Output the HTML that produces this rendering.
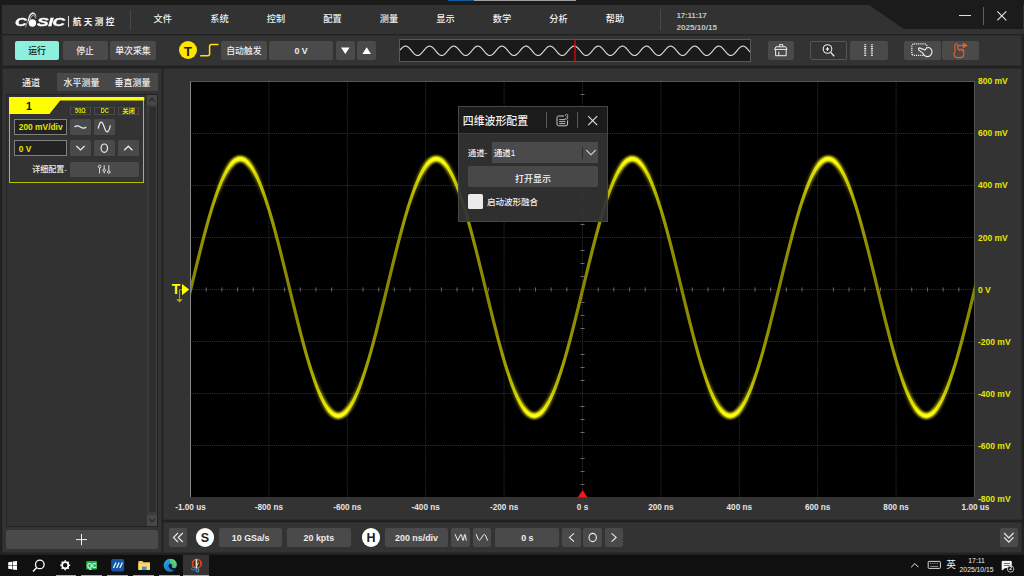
<!DOCTYPE html>
<html lang="zh"><head><meta charset="utf-8"><title>四维波形配置</title>
<style>
*{box-sizing:border-box;margin:0;padding:0}
html,body{width:1024px;height:576px;overflow:hidden;background:#212121}
body{position:relative;font-family:"Liberation Sans","Noto Sans CJK SC",sans-serif;color:#e6e6e6;font-size:9px;line-height:1}
.abs{position:absolute}
.btn{position:absolute;background:#4a4a4a;border-radius:2px;display:flex;align-items:center;justify-content:center;color:#ececec;white-space:nowrap;padding-top:2.4px;font-weight:500}
.panel{position:absolute;background:#333;border:1.4px solid #2b2b2b}
.t{position:absolute;white-space:nowrap}
.c{transform:translate(-50%,-50%)}
svg{position:absolute;left:0;top:0;overflow:visible}
.menu{position:absolute;top:20.4px;font-size:9.2px;color:#f0f0f0;transform:translate(-50%,-50%);white-space:nowrap;font-weight:500}
.xl{position:absolute;top:508px;font-size:8.2px;font-weight:bold;color:#e4e4e4;transform:translate(-50%,-50%);white-space:nowrap}
.yl{position:absolute;left:978px;font-size:8.5px;font-weight:bold;color:#e6e600;transform:translate(0,-50%);white-space:nowrap}
</style></head><body>
<!-- header -->
<div class="abs" style="left:0;top:0;width:1024px;height:34.4px;background:#1b1b1b"></div>
<div class="abs" style="left:1.5px;top:5px;width:1022.5px;height:29px;background:#323232;clip-path:polygon(0 0,867.5px 0,902.5px 24px,1022.5px 24px,1022.5px 29px,0 29px)"></div>
<div class="abs" style="left:1022.6px;top:5px;width:1.4px;height:29px;background:#323232"></div>
<div class="abs" style="left:0;top:34px;width:1024px;height:1.3px;background:#222"></div>
<div class="abs" style="left:448px;top:0;width:25.7px;height:.9px;background:#0e5c9e"></div>
<div class="abs" style="left:473.7px;top:0;width:102.8px;height:.9px;background:#a0a0a0"></div>
<!-- logo -->
<div class="t" style="left:15px;top:15.9px;font-size:11.6px;font-weight:bold;font-style:italic;color:#fff;-webkit-text-stroke:.35px #fff;transform:scaleX(1.42);transform-origin:0 0">C</div>
<div class="t" style="left:37.2px;top:15.9px;font-size:11.6px;font-weight:bold;font-style:italic;color:#fff;-webkit-text-stroke:.35px #fff;transform:scaleX(1.5);transform-origin:0 0;letter-spacing:-.3px">SIC</div>
<svg width="1024" height="576" viewBox="0 0 1024 576"><circle cx="32.4" cy="23" r="3.7" fill="#fff"/><path d="M27.6 21.4Q28.6 13 32.6 12.2Q36 12.4 36.6 17.4Q35 14 32.6 14Q29.8 14.6 28.8 21.6z" fill="#f0f0f0"/><path d="M29.8 20Q30.6 15.6 33.2 15.2Q35.4 15.6 35.8 18.6" stroke="#ddd" stroke-width=".7" fill="none"/><path d="M27.6 21.4Q26.4 25 25.6 27.4" stroke="#ccc" stroke-width=".7" fill="none"/></svg>
<div class="abs" style="left:67.6px;top:16px;width:1.2px;height:11px;background:#d8d8d8"></div>
<div class="t" style="left:72.8px;top:18px;font-size:8.6px;font-weight:bold;color:#f4f4f4;letter-spacing:2.4px">航天测控</div>
<div class="abs" style="left:130px;top:9.5px;width:1px;height:20px;background:#484848"></div>
<div class="menu" style="left:162.8px">文件</div>
<div class="menu" style="left:219.4px">系统</div>
<div class="menu" style="left:275.9px">控制</div>
<div class="menu" style="left:332.4px">配置</div>
<div class="menu" style="left:389px">测量</div>
<div class="menu" style="left:445.5px">显示</div>
<div class="menu" style="left:502px">数学</div>
<div class="menu" style="left:558.4px">分析</div>
<div class="menu" style="left:615px">帮助</div>
<div class="abs" style="left:660.2px;top:9px;width:1px;height:21px;background:#484848"></div>
<div class="t" style="left:676.6px;top:11.9px;font-size:8.1px;font-weight:bold;color:#c4c4c4;letter-spacing:-.25px">17:11:17</div>
<div class="t" style="left:676.6px;top:23.6px;font-size:8.1px;font-weight:bold;color:#c4c4c4;letter-spacing:0">2025/10/15</div>
<!-- window controls -->
<div class="abs" style="left:959px;top:15px;width:12.4px;height:1.1px;background:#e0e0e0"></div>
<div class="abs" style="left:983.4px;top:6.5px;width:1.1px;height:18.5px;background:#5e5e5e"></div>
<svg width="1024" height="576" viewBox="0 0 1024 576"><path d="M997.3 11.3L1006.3 20.3M1006.3 11.3L997.3 20.3" stroke="#e8e8e8" stroke-width="1.1" fill="none"/></svg>

<!-- toolbar -->
<div class="panel" style="left:1.5px;top:35.2px;width:1020.7px;height:31.2px"></div>
<div class="btn" style="left:15px;top:41.2px;width:44px;height:18.4px;background:#8cf0dc;color:#111;font-size:8.9px;font-weight:500">运行</div>
<div class="btn" style="left:62.5px;top:41.2px;width:45px;height:18.4px;font-size:8.9px">停止</div>
<div class="btn" style="left:110.2px;top:41.2px;width:45.6px;height:18.4px;font-size:8.9px">单次采集</div>
<div class="abs" style="left:179px;top:41px;width:18px;height:18px;border-radius:50%;background:#fce600"></div>
<div class="t c" style="left:188px;top:51.2px;font-size:13px;font-weight:bold;color:#222">T</div>
<svg width="1024" height="576" viewBox="0 0 1024 576"><path d="M200.2 55.8H207.6Q209.6 55.8 209.6 53.8V46.6Q209.6 44.6 211.6 44.6H218.5" stroke="#fce600" stroke-width="1.5" fill="none"/></svg>
<div class="btn" style="left:221.2px;top:41.2px;width:45.4px;height:18.4px;font-size:8.9px">自动触发</div>
<div class="btn" style="left:269px;top:41.2px;width:64.3px;height:18.4px;font-size:8.8px;font-weight:bold">0 V</div>
<div class="btn" style="left:336px;top:41.2px;width:18.6px;height:18.4px"></div>
<div class="btn" style="left:357.3px;top:41.2px;width:18.7px;height:18.4px"></div>
<svg width="1024" height="576" viewBox="0 0 1024 576"><path d="M341 47.4H349.6L345.3 54z" fill="#fff"/><path d="M362.4 54H371L366.7 47.2z" fill="#fff"/></svg>
<!-- mini waveform -->
<div class="abs" style="left:399px;top:39.4px;width:352px;height:22.4px;background:#1a1a1a;border:1px solid #585858"></div>
<svg width="1024" height="576" viewBox="0 0 1024 576"><path d="M400.0,50.2 L400.5,49.6 L401.0,49.0 L401.5,48.5 L402.0,47.9 L402.5,47.5 L403.0,47.1 L403.5,46.7 L404.0,46.5 L404.5,46.3 L405.0,46.1 L405.5,46.1 L406.0,46.1 L406.5,46.3 L407.0,46.4 L407.5,46.7 L408.0,47.0 L408.5,47.4 L409.0,47.9 L409.5,48.4 L410.0,49.0 L410.5,49.5 L411.0,50.1 L411.5,50.7 L412.0,51.4 L412.5,52.0 L413.0,52.5 L413.5,53.1 L414.0,53.6 L414.5,54.1 L415.0,54.5 L415.5,54.8 L416.0,55.1 L416.5,55.3 L417.0,55.4 L417.5,55.5 L418.0,55.5 L418.5,55.4 L419.0,55.2 L419.5,54.9 L420.0,54.6 L420.5,54.2 L421.0,53.7 L421.5,53.2 L422.0,52.7 L422.5,52.1 L423.0,51.5 L423.5,50.9 L424.0,50.3 L424.5,49.7 L425.0,49.1 L425.5,48.6 L426.0,48.0 L426.5,47.6 L427.0,47.2 L427.5,46.8 L428.0,46.5 L428.5,46.3 L429.0,46.2 L429.5,46.1 L430.0,46.1 L430.5,46.2 L431.0,46.4 L431.5,46.7 L432.0,47.0 L432.5,47.4 L433.0,47.8 L433.5,48.3 L434.0,48.8 L434.5,49.4 L435.0,50.0 L435.5,50.6 L436.0,51.2 L436.5,51.8 L437.0,52.4 L437.5,53.0 L438.0,53.5 L438.5,54.0 L439.0,54.4 L439.5,54.8 L440.0,55.1 L440.5,55.3 L441.0,55.4 L441.5,55.5 L442.0,55.5 L442.5,55.4 L443.0,55.2 L443.5,55.0 L444.0,54.7 L444.5,54.3 L445.0,53.8 L445.5,53.4 L446.0,52.8 L446.5,52.2 L447.0,51.7 L447.5,51.0 L448.0,50.4 L448.5,49.8 L449.0,49.2 L449.5,48.7 L450.0,48.1 L450.5,47.7 L451.0,47.2 L451.5,46.9 L452.0,46.6 L452.5,46.3 L453.0,46.2 L453.5,46.1 L454.0,46.1 L454.5,46.2 L455.0,46.4 L455.5,46.6 L456.0,46.9 L456.5,47.3 L457.0,47.7 L457.5,48.2 L458.0,48.7 L458.5,49.3 L459.0,49.9 L459.5,50.5 L460.0,51.1 L460.5,51.7 L461.0,52.3 L461.5,52.9 L462.0,53.4 L462.5,53.9 L463.0,54.3 L463.5,54.7 L464.0,55.0 L464.5,55.2 L465.0,55.4 L465.5,55.5 L466.0,55.5 L466.5,55.4 L467.0,55.3 L467.5,55.0 L468.0,54.7 L468.5,54.4 L469.0,53.9 L469.5,53.5 L470.0,52.9 L470.5,52.4 L471.0,51.8 L471.5,51.2 L472.0,50.6 L472.5,49.9 L473.0,49.4 L473.5,48.8 L474.0,48.2 L474.5,47.8 L475.0,47.3 L475.5,46.9 L476.0,46.6 L476.5,46.4 L477.0,46.2 L477.5,46.1 L478.0,46.1 L478.5,46.2 L479.0,46.3 L479.5,46.5 L480.0,46.8 L480.5,47.2 L481.0,47.6 L481.5,48.1 L482.0,48.6 L482.5,49.2 L483.0,49.8 L483.5,50.4 L484.0,51.0 L484.5,51.6 L485.0,52.2 L485.5,52.8 L486.0,53.3 L486.5,53.8 L487.0,54.2 L487.5,54.6 L488.0,54.9 L488.5,55.2 L489.0,55.4 L489.5,55.5 L490.0,55.5 L490.5,55.4 L491.0,55.3 L491.5,55.1 L492.0,54.8 L492.5,54.4 L493.0,54.0 L493.5,53.6 L494.0,53.0 L494.5,52.5 L495.0,51.9 L495.5,51.3 L496.0,50.7 L496.5,50.1 L497.0,49.5 L497.5,48.9 L498.0,48.4 L498.5,47.9 L499.0,47.4 L499.5,47.0 L500.0,46.7 L500.5,46.4 L501.0,46.2 L501.5,46.1 L502.0,46.1 L502.5,46.2 L503.0,46.3 L503.5,46.5 L504.0,46.8 L504.5,47.1 L505.0,47.5 L505.5,48.0 L506.0,48.5 L506.5,49.1 L507.0,49.6 L507.5,50.2 L508.0,50.9 L508.5,51.5 L509.0,52.1 L509.5,52.6 L510.0,53.2 L510.5,53.7 L511.0,54.2 L511.5,54.6 L512.0,54.9 L512.5,55.2 L513.0,55.3 L513.5,55.5 L514.0,55.5 L514.5,55.5 L515.0,55.3 L515.5,55.1 L516.0,54.9 L516.5,54.5 L517.0,54.1 L517.5,53.7 L518.0,53.1 L518.5,52.6 L519.0,52.0 L519.5,51.4 L520.0,50.8 L520.5,50.2 L521.0,49.6 L521.5,49.0 L522.0,48.5 L522.5,47.9 L523.0,47.5 L523.5,47.1 L524.0,46.7 L524.5,46.5 L525.0,46.3 L525.5,46.1 L526.0,46.1 L526.5,46.1 L527.0,46.3 L527.5,46.4 L528.0,46.7 L528.5,47.0 L529.0,47.4 L529.5,47.9 L530.0,48.4 L530.5,49.0 L531.0,49.5 L531.5,50.1 L532.0,50.7 L532.5,51.4 L533.0,52.0 L533.5,52.5 L534.0,53.1 L534.5,53.6 L535.0,54.1 L535.5,54.5 L536.0,54.8 L536.5,55.1 L537.0,55.3 L537.5,55.4 L538.0,55.5 L538.5,55.5 L539.0,55.4 L539.5,55.2 L540.0,54.9 L540.5,54.6 L541.0,54.2 L541.5,53.7 L542.0,53.2 L542.5,52.7 L543.0,52.1 L543.5,51.5 L544.0,50.9 L544.5,50.3 L545.0,49.7 L545.5,49.1 L546.0,48.6 L546.5,48.0 L547.0,47.6 L547.5,47.2 L548.0,46.8 L548.5,46.5 L549.0,46.3 L549.5,46.2 L550.0,46.1 L550.5,46.1 L551.0,46.2 L551.5,46.4 L552.0,46.7 L552.5,47.0 L553.0,47.4 L553.5,47.8 L554.0,48.3 L554.5,48.8 L555.0,49.4 L555.5,50.0 L556.0,50.6 L556.5,51.2 L557.0,51.8 L557.5,52.4 L558.0,53.0 L558.5,53.5 L559.0,54.0 L559.5,54.4 L560.0,54.8 L560.5,55.1 L561.0,55.3 L561.5,55.4 L562.0,55.5 L562.5,55.5 L563.0,55.4 L563.5,55.2 L564.0,55.0 L564.5,54.7 L565.0,54.3 L565.5,53.8 L566.0,53.4 L566.5,52.8 L567.0,52.2 L567.5,51.7 L568.0,51.0 L568.5,50.4 L569.0,49.8 L569.5,49.2 L570.0,48.7 L570.5,48.1 L571.0,47.7 L571.5,47.2 L572.0,46.9 L572.5,46.6 L573.0,46.3 L573.5,46.2 L574.0,46.1 L574.5,46.1 L575.0,46.2 L575.5,46.4 L576.0,46.6 L576.5,46.9 L577.0,47.3 L577.5,47.7 L578.0,48.2 L578.5,48.7 L579.0,49.3 L579.5,49.9 L580.0,50.5 L580.5,51.1 L581.0,51.7 L581.5,52.3 L582.0,52.9 L582.5,53.4 L583.0,53.9 L583.5,54.3 L584.0,54.7 L584.5,55.0 L585.0,55.2 L585.5,55.4 L586.0,55.5 L586.5,55.5 L587.0,55.4 L587.5,55.3 L588.0,55.0 L588.5,54.7 L589.0,54.4 L589.5,53.9 L590.0,53.5 L590.5,52.9 L591.0,52.4 L591.5,51.8 L592.0,51.2 L592.5,50.6 L593.0,49.9 L593.5,49.4 L594.0,48.8 L594.5,48.2 L595.0,47.8 L595.5,47.3 L596.0,46.9 L596.5,46.6 L597.0,46.4 L597.5,46.2 L598.0,46.1 L598.5,46.1 L599.0,46.2 L599.5,46.3 L600.0,46.5 L600.5,46.8 L601.0,47.2 L601.5,47.6 L602.0,48.1 L602.5,48.6 L603.0,49.2 L603.5,49.8 L604.0,50.4 L604.5,51.0 L605.0,51.6 L605.5,52.2 L606.0,52.8 L606.5,53.3 L607.0,53.8 L607.5,54.2 L608.0,54.6 L608.5,54.9 L609.0,55.2 L609.5,55.4 L610.0,55.5 L610.5,55.5 L611.0,55.4 L611.5,55.3 L612.0,55.1 L612.5,54.8 L613.0,54.4 L613.5,54.0 L614.0,53.6 L614.5,53.0 L615.0,52.5 L615.5,51.9 L616.0,51.3 L616.5,50.7 L617.0,50.1 L617.5,49.5 L618.0,48.9 L618.5,48.4 L619.0,47.9 L619.5,47.4 L620.0,47.0 L620.5,46.7 L621.0,46.4 L621.5,46.2 L622.0,46.1 L622.5,46.1 L623.0,46.2 L623.5,46.3 L624.0,46.5 L624.5,46.8 L625.0,47.1 L625.5,47.5 L626.0,48.0 L626.5,48.5 L627.0,49.1 L627.5,49.6 L628.0,50.2 L628.5,50.9 L629.0,51.5 L629.5,52.1 L630.0,52.6 L630.5,53.2 L631.0,53.7 L631.5,54.2 L632.0,54.6 L632.5,54.9 L633.0,55.2 L633.5,55.3 L634.0,55.5 L634.5,55.5 L635.0,55.5 L635.5,55.3 L636.0,55.1 L636.5,54.9 L637.0,54.5 L637.5,54.1 L638.0,53.7 L638.5,53.1 L639.0,52.6 L639.5,52.0 L640.0,51.4 L640.5,50.8 L641.0,50.2 L641.5,49.6 L642.0,49.0 L642.5,48.5 L643.0,47.9 L643.5,47.5 L644.0,47.1 L644.5,46.7 L645.0,46.5 L645.5,46.3 L646.0,46.1 L646.5,46.1 L647.0,46.1 L647.5,46.3 L648.0,46.4 L648.5,46.7 L649.0,47.0 L649.5,47.4 L650.0,47.9 L650.5,48.4 L651.0,49.0 L651.5,49.5 L652.0,50.1 L652.5,50.7 L653.0,51.4 L653.5,52.0 L654.0,52.5 L654.5,53.1 L655.0,53.6 L655.5,54.1 L656.0,54.5 L656.5,54.8 L657.0,55.1 L657.5,55.3 L658.0,55.4 L658.5,55.5 L659.0,55.5 L659.5,55.4 L660.0,55.2 L660.5,54.9 L661.0,54.6 L661.5,54.2 L662.0,53.7 L662.5,53.2 L663.0,52.7 L663.5,52.1 L664.0,51.5 L664.5,50.9 L665.0,50.3 L665.5,49.7 L666.0,49.1 L666.5,48.6 L667.0,48.0 L667.5,47.6 L668.0,47.2 L668.5,46.8 L669.0,46.5 L669.5,46.3 L670.0,46.2 L670.5,46.1 L671.0,46.1 L671.5,46.2 L672.0,46.4 L672.5,46.7 L673.0,47.0 L673.5,47.4 L674.0,47.8 L674.5,48.3 L675.0,48.8 L675.5,49.4 L676.0,50.0 L676.5,50.6 L677.0,51.2 L677.5,51.8 L678.0,52.4 L678.5,53.0 L679.0,53.5 L679.5,54.0 L680.0,54.4 L680.5,54.8 L681.0,55.1 L681.5,55.3 L682.0,55.4 L682.5,55.5 L683.0,55.5 L683.5,55.4 L684.0,55.2 L684.5,55.0 L685.0,54.7 L685.5,54.3 L686.0,53.8 L686.5,53.4 L687.0,52.8 L687.5,52.2 L688.0,51.7 L688.5,51.0 L689.0,50.4 L689.5,49.8 L690.0,49.2 L690.5,48.7 L691.0,48.1 L691.5,47.7 L692.0,47.2 L692.5,46.9 L693.0,46.6 L693.5,46.3 L694.0,46.2 L694.5,46.1 L695.0,46.1 L695.5,46.2 L696.0,46.4 L696.5,46.6 L697.0,46.9 L697.5,47.3 L698.0,47.7 L698.5,48.2 L699.0,48.7 L699.5,49.3 L700.0,49.9 L700.5,50.5 L701.0,51.1 L701.5,51.7 L702.0,52.3 L702.5,52.9 L703.0,53.4 L703.5,53.9 L704.0,54.3 L704.5,54.7 L705.0,55.0 L705.5,55.2 L706.0,55.4 L706.5,55.5 L707.0,55.5 L707.5,55.4 L708.0,55.3 L708.5,55.0 L709.0,54.7 L709.5,54.4 L710.0,53.9 L710.5,53.5 L711.0,52.9 L711.5,52.4 L712.0,51.8 L712.5,51.2 L713.0,50.6 L713.5,49.9 L714.0,49.4 L714.5,48.8 L715.0,48.2 L715.5,47.8 L716.0,47.3 L716.5,46.9 L717.0,46.6 L717.5,46.4 L718.0,46.2 L718.5,46.1 L719.0,46.1 L719.5,46.2 L720.0,46.3 L720.5,46.5 L721.0,46.8 L721.5,47.2 L722.0,47.6 L722.5,48.1 L723.0,48.6 L723.5,49.2 L724.0,49.8 L724.5,50.4 L725.0,51.0 L725.5,51.6 L726.0,52.2 L726.5,52.8 L727.0,53.3 L727.5,53.8 L728.0,54.2 L728.5,54.6 L729.0,54.9 L729.5,55.2 L730.0,55.4 L730.5,55.5 L731.0,55.5 L731.5,55.4 L732.0,55.3 L732.5,55.1 L733.0,54.8 L733.5,54.4 L734.0,54.0 L734.5,53.6 L735.0,53.0 L735.5,52.5 L736.0,51.9 L736.5,51.3 L737.0,50.7 L737.5,50.1 L738.0,49.5 L738.5,48.9 L739.0,48.4 L739.5,47.9 L740.0,47.4 L740.5,47.0 L741.0,46.7 L741.5,46.4 L742.0,46.2 L742.5,46.1 L743.0,46.1 L743.5,46.2 L744.0,46.3 L744.5,46.5 L745.0,46.8 L745.5,47.1 L746.0,47.5 L746.5,48.0 L747.0,48.5 L747.5,49.1 L748.0,49.6 L748.5,50.2 L749.0,50.9 L749.5,51.5 L750.0,52.1" stroke="#dcdcdc" stroke-width="1.15" fill="none"/><path d="M575 39.5V61.7" stroke="#f00000" stroke-width="1.3"/></svg>
<div class="btn" style="left:767.5px;top:41.2px;width:26.5px;height:18.4px"></div>
<div class="btn" style="left:810.2px;top:41.2px;width:37.3px;height:18.5px;background:#333;border:1px solid #555"></div>
<div class="btn" style="left:850.4px;top:41.2px;width:37.2px;height:18.4px"></div>
<div class="btn" style="left:903.5px;top:41.2px;width:37.2px;height:18.4px"></div>
<div class="btn" style="left:942.2px;top:41.2px;width:36.8px;height:18.4px"></div>
<svg id="tbicons" width="1024" height="576" viewBox="0 0 1024 576" fill="none" stroke="#eee" stroke-width="1">
<!-- trash/basket -->
<path d="M779.6 46.8V44.6H782.8V46.8M775.9 46.8H785.7L787 49.4H774.6zM775.6 49.4V55.7H786.2V49.4M778.8 55.7V51.8"/>
<!-- zoom -->
<circle cx="827.5" cy="49" r="4.3" stroke-width="1.1"/><path d="M830.7 52.4L834.2 56.2" stroke-width="1.3"/><path d="M825.8 49H829.2M827.5 47.3V50.7" stroke-width="1.2" stroke="#fff"/>
<!-- cursors -->
<path d="M865.2 44.2V56.8M871.9 44.2V56.8" stroke="#e4e4e4" stroke-width="2" stroke-dasharray="1.1 .7"/>
<!-- select -->
<rect x="911.8" y="43.8" width="15" height="11.6" rx="2.2" stroke-dasharray="1.2 .9" stroke-width="1.3"/>
<path d="M918.7 49.8Q917.9 48.2 919.7 47.9L925 50Q926.4 47.2 929 47.5Q932.4 48.8 931.9 52.6Q930.9 56.8 927 56.6Q924 56.3 923 53.4z" fill="#4a4a4a" stroke-width="1.1"/>
<!-- hand -->
<g stroke="#f0601e" stroke-width="1.1">
<path d="M954.9 52.2V45.2Q954.9 43.8 956.4 43.8T957.9 45.2V49.2H961.6Q963.8 49.4 963.8 51.6V54.4Q963.6 57.4 960.6 57.6H957.6Q954.6 57.4 954.1 54.8Q953.5 53 954.9 52.2"/>
<path d="M959.4 49.4V51.2M961 49.6V51.4M962.5 50V51.6" stroke-width=".8"/>
<path d="M957.9 45.5H963.6"/><path d="M963.4 43.5L966.6 45.5L963.4 47.5z" fill="#f0601e"/>
</g>
</svg>

<!-- left panel -->
<div class="panel" style="left:1.5px;top:67.8px;width:160.7px;height:484.8px"></div>
<div class="abs" style="left:56.5px;top:72.7px;width:101.5px;height:18.3px;background:#484848;border-radius:1px"></div>
<div class="t c" style="left:31px;top:82.9px;font-size:9px;font-weight:500;color:#f4f4f4">通道</div>
<div class="t c" style="left:81.5px;top:82.9px;font-size:9px;font-weight:500;color:#f0f0f0">水平测量</div>
<div class="t c" style="left:132.5px;top:82.9px;font-size:9px;font-weight:500;color:#f0f0f0">垂直测量</div>
<div class="abs" style="left:5.5px;top:93.6px;width:152.5px;height:433px;background:#323232;border:1px solid #232323"></div>
<!-- scrollbar -->
<div class="abs" style="left:147px;top:94.6px;width:10.3px;height:431.6px;background:#3a3a3a"></div>
<div class="abs" style="left:147px;top:94.8px;width:10.3px;height:10.2px;background:#484848"></div>
<div class="abs" style="left:147px;top:515.2px;width:10.3px;height:11px;background:#484848"></div>
<div class="abs" style="left:148px;top:106.4px;width:8.6px;height:406.8px;background:#2e2e2e;border:1px solid #3e3e3e"></div>
<svg width="1024" height="576" viewBox="0 0 1024 576"><path d="M149.3 101.4L152.1 98.4L154.9 101.4" stroke="#2c2c2c" stroke-width="1.5" fill="none"/><path d="M149.3 519L152.1 522L154.9 519" stroke="#2c2c2c" stroke-width="1.5" fill="none"/></svg>
<!-- channel card -->
<div class="abs" style="left:9px;top:97px;width:135.3px;height:85.6px;background:#333;border:1px solid #bcbc00"></div>
<svg width="1024" height="576" viewBox="0 0 1024 576"><path d="M9 97H144.3V100.4H60.2L49.4 114H9z" fill="#ffff00"/></svg>
<div class="t c" style="left:29px;top:106.2px;font-size:10.6px;font-weight:bold;color:#111">1</div>
<div class="abs badge" style="left:70.3px"><span>50Ω</span></div>
<div class="abs badge" style="left:94px"><span>DC</span></div>
<div class="abs badge" style="left:118px"><span style="font-size:6.2px;transform:none">关闭</span></div>
<style>.badge{top:107.2px;width:20.8px;height:7.4px;background:#333;border:1px solid #4a4a4a;color:#e6e600;font-size:6.7px;font-weight:bold;display:flex;align-items:center;justify-content:center}.badge span{display:block;line-height:1;transform:scaleX(.84);padding-top:.6px}
.inp{position:absolute;left:14px;width:53px;height:16.4px;background:#232323;border:1px solid #808080;color:#e6e600;font-size:8.4px;font-weight:bold;display:flex;align-items:center;padding-left:3.8px;padding-top:1.4px;white-space:nowrap}
.sb{position:absolute;width:20.6px;height:16.4px;background:#4a4a4a;border-radius:1.5px}
</style>
<div class="inp" style="top:118.8px">200 mV/div</div>
<div class="sb" style="left:70.2px;top:118.8px"></div>
<div class="sb" style="left:94px;top:118.8px"></div>
<div class="inp" style="top:140px">0 V</div>
<div class="sb" style="left:70.2px;top:140px"></div>
<div class="sb" style="left:94px;top:140px"></div>
<div class="sb" style="left:118px;top:140px"></div>
<div class="t" style="right:957px;top:170.2px;transform:translateY(-50%);font-size:8px;font-weight:500;color:#f0f0f0">详细配置-</div>
<div class="sb" style="left:70.2px;top:161.6px;width:68.6px;height:15.8px"></div>
<svg width="1024" height="576" viewBox="0 0 1024 576" fill="none" stroke="#eee" stroke-width="1">
<path d="M74.6 127Q77 124.6 80.4 127T86.2 127" stroke-width="1.2"/>
<path d="M98.2 128.6Q100.8 116.4 104.2 127T110.4 125.4" stroke-width="1.2"/>
<path d="M76.4 146L80.5 150L84.6 146" stroke-width="1.2"/>
<ellipse cx="104.3" cy="148.2" rx="3.2" ry="4.2" stroke-width="1.2"/>
<path d="M124.2 150.2L128.3 146.2L132.4 150.2" stroke-width="1.2"/>
<g stroke-width=".9"><circle cx="99.6" cy="166.6" r="1.3"/><path d="M99.6 168V173.4"/><circle cx="104.2" cy="170.2" r="1.3"/><path d="M104.2 165.2V168.8M104.2 171.6V173.4"/><circle cx="108.8" cy="172" r="1.3"/><path d="M108.8 165.2V170.6"/></g>
</svg>
<!-- plus -->
<div class="btn" style="left:6px;top:530px;width:152px;height:18.7px"></div>
<svg width="1024" height="576" viewBox="0 0 1024 576"><path d="M76 539.6H87M81.5 534V545.2" stroke="#f0f0f0" stroke-width="1" fill="none"/></svg>

<!-- plot panel -->
<div class="panel" style="left:163.4px;top:67.8px;width:858.8px;height:452.7px"></div>
<div class="abs" style="left:190px;top:81px;width:785px;height:416.2px;background:#000;border-left:1px solid #868686;border-top:1px solid #555;border-right:1px solid #555"></div>
<svg id="plot" width="1024" height="576" viewBox="0 0 1024 576">
<defs>
<linearGradient id="wg" gradientUnits="userSpaceOnUse" x1="239.9" y1="0" x2="337.9" y2="0" spreadMethod="repeat">
<stop offset="0" stop-color="#ffff18"/><stop offset=".08" stop-color="#f8f80a"/><stop offset=".18" stop-color="#d0d000"/><stop offset=".28" stop-color="#a2a200"/><stop offset=".4" stop-color="#8e8e00"/><stop offset=".5" stop-color="#868600"/><stop offset=".6" stop-color="#8e8e00"/><stop offset=".72" stop-color="#a2a200"/><stop offset=".82" stop-color="#d0d000"/><stop offset=".92" stop-color="#f8f80a"/><stop offset="1" stop-color="#ffff18"/>
</linearGradient>
<linearGradient id="wg2" gradientUnits="userSpaceOnUse" x1="239.9" y1="0" x2="337.9" y2="0" spreadMethod="repeat">
<stop offset="0" stop-color="#ffff10" stop-opacity=".95"/><stop offset=".07" stop-color="#ffff00" stop-opacity=".8"/><stop offset=".16" stop-color="#f0f000" stop-opacity=".4"/><stop offset=".27" stop-color="#e0e000" stop-opacity="0"/><stop offset=".73" stop-color="#e0e000" stop-opacity="0"/><stop offset=".84" stop-color="#f0f000" stop-opacity=".4"/><stop offset=".93" stop-color="#ffff00" stop-opacity=".8"/><stop offset="1" stop-color="#ffff10" stop-opacity=".95"/>
</linearGradient>
<clipPath id="pc"><rect x="191" y="82" width="783.5" height="415.4"/></clipPath>
<filter id="bl" x="-5%" y="-5%" width="110%" height="110%"><feGaussianBlur stdDeviation=".7"/></filter><filter id="bl2" x="-5%" y="-5%" width="110%" height="110%"><feGaussianBlur stdDeviation="1.1"/></filter>
</defs>
<g stroke="#707070" stroke-width="1" stroke-dasharray="1.07 1.07" opacity=".45">
<path d="M268.90 81.5V497.5"/>
<path d="M347.30 81.5V497.5"/>
<path d="M425.70 81.5V497.5"/>
<path d="M504.10 81.5V497.5"/>
<path d="M582.50 81.5V497.5"/>
<path d="M660.90 81.5V497.5"/>
<path d="M739.30 81.5V497.5"/>
<path d="M817.70 81.5V497.5"/>
<path d="M896.10 81.5V497.5"/>
<path d="M190.5 133.50H974.5"/>
<path d="M190.5 185.50H974.5"/>
<path d="M190.5 237.50H974.5"/>
<path d="M190.5 289.50H974.5"/>
<path d="M190.5 341.50H974.5"/>
<path d="M190.5 393.50H974.5"/>
<path d="M190.5 445.50H974.5"/>
</g>
<g stroke="#6a6a6a" stroke-width="1">
<path d="M206.18 287.5V291.5M221.86 287.5V291.5M237.54 287.5V291.5M253.22 287.5V291.5M284.58 287.5V291.5M300.26 287.5V291.5M315.94 287.5V291.5M331.62 287.5V291.5M362.98 287.5V291.5M378.66 287.5V291.5M394.34 287.5V291.5M410.02 287.5V291.5M441.38 287.5V291.5M457.06 287.5V291.5M472.74 287.5V291.5M488.42 287.5V291.5M519.78 287.5V291.5M535.46 287.5V291.5M551.14 287.5V291.5M566.82 287.5V291.5M598.18 287.5V291.5M613.86 287.5V291.5M629.54 287.5V291.5M645.22 287.5V291.5M676.58 287.5V291.5M692.26 287.5V291.5M707.94 287.5V291.5M723.62 287.5V291.5M754.98 287.5V291.5M770.66 287.5V291.5M786.34 287.5V291.5M802.02 287.5V291.5M833.38 287.5V291.5M849.06 287.5V291.5M864.74 287.5V291.5M880.42 287.5V291.5M911.78 287.5V291.5M927.46 287.5V291.5M943.14 287.5V291.5M958.82 287.5V291.5M580.5 94.50H584.5M580.5 107.50H584.5M580.5 120.50H584.5M580.5 146.50H584.5M580.5 159.50H584.5M580.5 172.50H584.5M580.5 198.50H584.5M580.5 211.50H584.5M580.5 224.50H584.5M580.5 250.50H584.5M580.5 263.50H584.5M580.5 276.50H584.5M580.5 302.50H584.5M580.5 315.50H584.5M580.5 328.50H584.5M580.5 354.50H584.5M580.5 367.50H584.5M580.5 380.50H584.5M580.5 406.50H584.5M580.5 419.50H584.5M580.5 432.50H584.5M580.5 458.50H584.5M580.5 471.50H584.5M580.5 484.50H584.5"/>
</g>
<g clip-path="url(#pc)" fill="none" stroke-linejoin="round">
<path d="M185.0,312.7 L186.0,308.6 L187.0,304.5 L188.0,300.5 L189.0,296.4 L190.0,292.2 L191.0,288.1 L192.0,284.0 L193.0,279.9 L194.0,275.8 L195.0,271.7 L196.0,267.6 L197.0,263.5 L198.0,259.5 L199.0,255.5 L200.0,251.5 L201.0,247.6 L202.0,243.7 L203.0,239.8 L204.0,236.0 L205.0,232.3 L206.0,228.6 L207.0,225.0 L208.0,221.4 L209.0,217.9 L210.0,214.5 L211.0,211.1 L212.0,207.8 L213.0,204.6 L214.0,201.5 L215.0,198.5 L216.0,195.6 L217.0,192.7 L218.0,190.0 L219.0,187.4 L220.0,184.8 L221.0,182.4 L222.0,180.1 L223.0,177.8 L224.0,175.7 L225.0,173.8 L226.0,171.9 L227.0,170.1 L228.0,168.5 L229.0,167.0 L230.0,165.6 L231.0,164.3 L232.0,163.2 L233.0,162.2 L234.0,161.3 L235.0,160.6 L236.0,160.0 L237.0,159.5 L238.0,159.1 L239.0,158.9 L240.0,158.8 L241.0,158.8 L242.0,159.0 L243.0,159.3 L244.0,159.8 L245.0,160.3 L246.0,161.0 L247.0,161.8 L248.0,162.8 L249.0,163.9 L250.0,165.1 L251.0,166.4 L252.0,167.9 L253.0,169.5 L254.0,171.2 L255.0,173.0 L256.0,174.9 L257.0,177.0 L258.0,179.2 L259.0,181.4 L260.0,183.8 L261.0,186.3 L262.0,188.9 L263.0,191.6 L264.0,194.4 L265.0,197.3 L266.0,200.3 L267.0,203.4 L268.0,206.5 L269.0,209.8 L270.0,213.1 L271.0,216.5 L272.0,220.0 L273.0,223.5 L274.0,227.1 L275.0,230.8 L276.0,234.5 L277.0,238.3 L278.0,242.1 L279.0,246.0 L280.0,249.9 L281.0,253.9 L282.0,257.9 L283.0,261.9 L284.0,266.0 L285.0,270.1 L286.0,274.1 L287.0,278.2 L288.0,282.4 L289.0,286.5 L290.0,290.6 L291.0,294.7 L292.0,298.8 L293.0,302.9 L294.0,307.0 L295.0,311.1 L296.0,315.1 L297.0,319.1 L298.0,323.1 L299.0,327.0 L300.0,330.9 L301.0,334.8 L302.0,338.6 L303.0,342.3 L304.0,346.0 L305.0,349.6 L306.0,353.2 L307.0,356.7 L308.0,360.1 L309.0,363.5 L310.0,366.8 L311.0,370.0 L312.0,373.1 L313.0,376.1 L314.0,379.0 L315.0,381.9 L316.0,384.6 L317.0,387.2 L318.0,389.8 L319.0,392.2 L320.0,394.5 L321.0,396.8 L322.0,398.9 L323.0,400.8 L324.0,402.7 L325.0,404.5 L326.0,406.1 L327.0,407.6 L328.0,409.0 L329.0,410.3 L330.0,411.4 L331.0,412.4 L332.0,413.3 L333.0,414.0 L334.0,414.6 L335.0,415.1 L336.0,415.5 L337.0,415.7 L338.0,415.8 L339.0,415.8 L340.0,415.6 L341.0,415.3 L342.0,414.8 L343.0,414.3 L344.0,413.6 L345.0,412.8 L346.0,411.8 L347.0,410.7 L348.0,409.5 L349.0,408.2 L350.0,406.7 L351.0,405.1 L352.0,403.4 L353.0,401.6 L354.0,399.7 L355.0,397.6 L356.0,395.4 L357.0,393.2 L358.0,390.8 L359.0,388.3 L360.0,385.7 L361.0,383.0 L362.0,380.2 L363.0,377.3 L364.0,374.3 L365.0,371.2 L366.0,368.1 L367.0,364.8 L368.0,361.5 L369.0,358.1 L370.0,354.6 L371.0,351.1 L372.0,347.5 L373.0,343.8 L374.0,340.1 L375.0,336.3 L376.0,332.5 L377.0,328.6 L378.0,324.7 L379.0,320.7 L380.0,316.7 L381.0,312.7 L382.0,308.6 L383.0,304.5 L384.0,300.5 L385.0,296.4 L386.0,292.2 L387.0,288.1 L388.0,284.0 L389.0,279.9 L390.0,275.8 L391.0,271.7 L392.0,267.6 L393.0,263.5 L394.0,259.5 L395.0,255.5 L396.0,251.5 L397.0,247.6 L398.0,243.7 L399.0,239.8 L400.0,236.0 L401.0,232.3 L402.0,228.6 L403.0,225.0 L404.0,221.4 L405.0,217.9 L406.0,214.5 L407.0,211.1 L408.0,207.8 L409.0,204.6 L410.0,201.5 L411.0,198.5 L412.0,195.6 L413.0,192.7 L414.0,190.0 L415.0,187.4 L416.0,184.8 L417.0,182.4 L418.0,180.1 L419.0,177.8 L420.0,175.7 L421.0,173.8 L422.0,171.9 L423.0,170.1 L424.0,168.5 L425.0,167.0 L426.0,165.6 L427.0,164.3 L428.0,163.2 L429.0,162.2 L430.0,161.3 L431.0,160.6 L432.0,160.0 L433.0,159.5 L434.0,159.1 L435.0,158.9 L436.0,158.8 L437.0,158.8 L438.0,159.0 L439.0,159.3 L440.0,159.8 L441.0,160.3 L442.0,161.0 L443.0,161.8 L444.0,162.8 L445.0,163.9 L446.0,165.1 L447.0,166.4 L448.0,167.9 L449.0,169.5 L450.0,171.2 L451.0,173.0 L452.0,174.9 L453.0,177.0 L454.0,179.2 L455.0,181.4 L456.0,183.8 L457.0,186.3 L458.0,188.9 L459.0,191.6 L460.0,194.4 L461.0,197.3 L462.0,200.3 L463.0,203.4 L464.0,206.5 L465.0,209.8 L466.0,213.1 L467.0,216.5 L468.0,220.0 L469.0,223.5 L470.0,227.1 L471.0,230.8 L472.0,234.5 L473.0,238.3 L474.0,242.1 L475.0,246.0 L476.0,249.9 L477.0,253.9 L478.0,257.9 L479.0,261.9 L480.0,266.0 L481.0,270.1 L482.0,274.1 L483.0,278.2 L484.0,282.4 L485.0,286.5 L486.0,290.6 L487.0,294.7 L488.0,298.8 L489.0,302.9 L490.0,307.0 L491.0,311.1 L492.0,315.1 L493.0,319.1 L494.0,323.1 L495.0,327.0 L496.0,330.9 L497.0,334.8 L498.0,338.6 L499.0,342.3 L500.0,346.0 L501.0,349.6 L502.0,353.2 L503.0,356.7 L504.0,360.1 L505.0,363.5 L506.0,366.8 L507.0,370.0 L508.0,373.1 L509.0,376.1 L510.0,379.0 L511.0,381.9 L512.0,384.6 L513.0,387.2 L514.0,389.8 L515.0,392.2 L516.0,394.5 L517.0,396.8 L518.0,398.9 L519.0,400.8 L520.0,402.7 L521.0,404.5 L522.0,406.1 L523.0,407.6 L524.0,409.0 L525.0,410.3 L526.0,411.4 L527.0,412.4 L528.0,413.3 L529.0,414.0 L530.0,414.6 L531.0,415.1 L532.0,415.5 L533.0,415.7 L534.0,415.8 L535.0,415.8 L536.0,415.6 L537.0,415.3 L538.0,414.8 L539.0,414.3 L540.0,413.6 L541.0,412.8 L542.0,411.8 L543.0,410.7 L544.0,409.5 L545.0,408.2 L546.0,406.7 L547.0,405.1 L548.0,403.4 L549.0,401.6 L550.0,399.7 L551.0,397.6 L552.0,395.4 L553.0,393.2 L554.0,390.8 L555.0,388.3 L556.0,385.7 L557.0,383.0 L558.0,380.2 L559.0,377.3 L560.0,374.3 L561.0,371.2 L562.0,368.1 L563.0,364.8 L564.0,361.5 L565.0,358.1 L566.0,354.6 L567.0,351.1 L568.0,347.5 L569.0,343.8 L570.0,340.1 L571.0,336.3 L572.0,332.5 L573.0,328.6 L574.0,324.7 L575.0,320.7 L576.0,316.7 L577.0,312.7 L578.0,308.6 L579.0,304.5 L580.0,300.5 L581.0,296.4 L582.0,292.2 L583.0,288.1 L584.0,284.0 L585.0,279.9 L586.0,275.8 L587.0,271.7 L588.0,267.6 L589.0,263.5 L590.0,259.5 L591.0,255.5 L592.0,251.5 L593.0,247.6 L594.0,243.7 L595.0,239.8 L596.0,236.0 L597.0,232.3 L598.0,228.6 L599.0,225.0 L600.0,221.4 L601.0,217.9 L602.0,214.5 L603.0,211.1 L604.0,207.8 L605.0,204.6 L606.0,201.5 L607.0,198.5 L608.0,195.6 L609.0,192.7 L610.0,190.0 L611.0,187.4 L612.0,184.8 L613.0,182.4 L614.0,180.1 L615.0,177.8 L616.0,175.7 L617.0,173.8 L618.0,171.9 L619.0,170.1 L620.0,168.5 L621.0,167.0 L622.0,165.6 L623.0,164.3 L624.0,163.2 L625.0,162.2 L626.0,161.3 L627.0,160.6 L628.0,160.0 L629.0,159.5 L630.0,159.1 L631.0,158.9 L632.0,158.8 L633.0,158.8 L634.0,159.0 L635.0,159.3 L636.0,159.8 L637.0,160.3 L638.0,161.0 L639.0,161.8 L640.0,162.8 L641.0,163.9 L642.0,165.1 L643.0,166.4 L644.0,167.9 L645.0,169.5 L646.0,171.2 L647.0,173.0 L648.0,174.9 L649.0,177.0 L650.0,179.2 L651.0,181.4 L652.0,183.8 L653.0,186.3 L654.0,188.9 L655.0,191.6 L656.0,194.4 L657.0,197.3 L658.0,200.3 L659.0,203.4 L660.0,206.5 L661.0,209.8 L662.0,213.1 L663.0,216.5 L664.0,220.0 L665.0,223.5 L666.0,227.1 L667.0,230.8 L668.0,234.5 L669.0,238.3 L670.0,242.1 L671.0,246.0 L672.0,249.9 L673.0,253.9 L674.0,257.9 L675.0,261.9 L676.0,266.0 L677.0,270.1 L678.0,274.1 L679.0,278.2 L680.0,282.4 L681.0,286.5 L682.0,290.6 L683.0,294.7 L684.0,298.8 L685.0,302.9 L686.0,307.0 L687.0,311.1 L688.0,315.1 L689.0,319.1 L690.0,323.1 L691.0,327.0 L692.0,330.9 L693.0,334.8 L694.0,338.6 L695.0,342.3 L696.0,346.0 L697.0,349.6 L698.0,353.2 L699.0,356.7 L700.0,360.1 L701.0,363.5 L702.0,366.8 L703.0,370.0 L704.0,373.1 L705.0,376.1 L706.0,379.0 L707.0,381.9 L708.0,384.6 L709.0,387.2 L710.0,389.8 L711.0,392.2 L712.0,394.5 L713.0,396.8 L714.0,398.9 L715.0,400.8 L716.0,402.7 L717.0,404.5 L718.0,406.1 L719.0,407.6 L720.0,409.0 L721.0,410.3 L722.0,411.4 L723.0,412.4 L724.0,413.3 L725.0,414.0 L726.0,414.6 L727.0,415.1 L728.0,415.5 L729.0,415.7 L730.0,415.8 L731.0,415.8 L732.0,415.6 L733.0,415.3 L734.0,414.8 L735.0,414.3 L736.0,413.6 L737.0,412.8 L738.0,411.8 L739.0,410.7 L740.0,409.5 L741.0,408.2 L742.0,406.7 L743.0,405.1 L744.0,403.4 L745.0,401.6 L746.0,399.7 L747.0,397.6 L748.0,395.4 L749.0,393.2 L750.0,390.8 L751.0,388.3 L752.0,385.7 L753.0,383.0 L754.0,380.2 L755.0,377.3 L756.0,374.3 L757.0,371.2 L758.0,368.1 L759.0,364.8 L760.0,361.5 L761.0,358.1 L762.0,354.6 L763.0,351.1 L764.0,347.5 L765.0,343.8 L766.0,340.1 L767.0,336.3 L768.0,332.5 L769.0,328.6 L770.0,324.7 L771.0,320.7 L772.0,316.7 L773.0,312.7 L774.0,308.6 L775.0,304.5 L776.0,300.5 L777.0,296.4 L778.0,292.2 L779.0,288.1 L780.0,284.0 L781.0,279.9 L782.0,275.8 L783.0,271.7 L784.0,267.6 L785.0,263.5 L786.0,259.5 L787.0,255.5 L788.0,251.5 L789.0,247.6 L790.0,243.7 L791.0,239.8 L792.0,236.0 L793.0,232.3 L794.0,228.6 L795.0,225.0 L796.0,221.4 L797.0,217.9 L798.0,214.5 L799.0,211.1 L800.0,207.8 L801.0,204.6 L802.0,201.5 L803.0,198.5 L804.0,195.6 L805.0,192.7 L806.0,190.0 L807.0,187.4 L808.0,184.8 L809.0,182.4 L810.0,180.1 L811.0,177.8 L812.0,175.7 L813.0,173.8 L814.0,171.9 L815.0,170.1 L816.0,168.5 L817.0,167.0 L818.0,165.6 L819.0,164.3 L820.0,163.2 L821.0,162.2 L822.0,161.3 L823.0,160.6 L824.0,160.0 L825.0,159.5 L826.0,159.1 L827.0,158.9 L828.0,158.8 L829.0,158.8 L830.0,159.0 L831.0,159.3 L832.0,159.8 L833.0,160.3 L834.0,161.0 L835.0,161.8 L836.0,162.8 L837.0,163.9 L838.0,165.1 L839.0,166.4 L840.0,167.9 L841.0,169.5 L842.0,171.2 L843.0,173.0 L844.0,174.9 L845.0,177.0 L846.0,179.2 L847.0,181.4 L848.0,183.8 L849.0,186.3 L850.0,188.9 L851.0,191.6 L852.0,194.4 L853.0,197.3 L854.0,200.3 L855.0,203.4 L856.0,206.5 L857.0,209.8 L858.0,213.1 L859.0,216.5 L860.0,220.0 L861.0,223.5 L862.0,227.1 L863.0,230.8 L864.0,234.5 L865.0,238.3 L866.0,242.1 L867.0,246.0 L868.0,249.9 L869.0,253.9 L870.0,257.9 L871.0,261.9 L872.0,266.0 L873.0,270.1 L874.0,274.1 L875.0,278.2 L876.0,282.4 L877.0,286.5 L878.0,290.6 L879.0,294.7 L880.0,298.8 L881.0,302.9 L882.0,307.0 L883.0,311.1 L884.0,315.1 L885.0,319.1 L886.0,323.1 L887.0,327.0 L888.0,330.9 L889.0,334.8 L890.0,338.6 L891.0,342.3 L892.0,346.0 L893.0,349.6 L894.0,353.2 L895.0,356.7 L896.0,360.1 L897.0,363.5 L898.0,366.8 L899.0,370.0 L900.0,373.1 L901.0,376.1 L902.0,379.0 L903.0,381.9 L904.0,384.6 L905.0,387.2 L906.0,389.8 L907.0,392.2 L908.0,394.5 L909.0,396.8 L910.0,398.9 L911.0,400.8 L912.0,402.7 L913.0,404.5 L914.0,406.1 L915.0,407.6 L916.0,409.0 L917.0,410.3 L918.0,411.4 L919.0,412.4 L920.0,413.3 L921.0,414.0 L922.0,414.6 L923.0,415.1 L924.0,415.5 L925.0,415.7 L926.0,415.8 L927.0,415.8 L928.0,415.6 L929.0,415.3 L930.0,414.8 L931.0,414.3 L932.0,413.6 L933.0,412.8 L934.0,411.8 L935.0,410.7 L936.0,409.5 L937.0,408.2 L938.0,406.7 L939.0,405.1 L940.0,403.4 L941.0,401.6 L942.0,399.7 L943.0,397.6 L944.0,395.4 L945.0,393.2 L946.0,390.8 L947.0,388.3 L948.0,385.7 L949.0,383.0 L950.0,380.2 L951.0,377.3 L952.0,374.3 L953.0,371.2 L954.0,368.1 L955.0,364.8 L956.0,361.5 L957.0,358.1 L958.0,354.6 L959.0,351.1 L960.0,347.5 L961.0,343.8 L962.0,340.1 L963.0,336.3 L964.0,332.5 L965.0,328.6 L966.0,324.7 L967.0,320.7 L968.0,316.7 L969.0,312.7 L970.0,308.6 L971.0,304.5 L972.0,300.5 L973.0,296.4 L974.0,292.2 L975.0,288.1 L976.0,284.0 L977.0,279.9 L978.0,275.8 L979.0,271.7 L980.0,267.6" stroke="url(#wg2)" stroke-width="6.2" filter="url(#bl2)"/>
<path d="M185.0,312.7 L186.0,308.6 L187.0,304.5 L188.0,300.5 L189.0,296.4 L190.0,292.2 L191.0,288.1 L192.0,284.0 L193.0,279.9 L194.0,275.8 L195.0,271.7 L196.0,267.6 L197.0,263.5 L198.0,259.5 L199.0,255.5 L200.0,251.5 L201.0,247.6 L202.0,243.7 L203.0,239.8 L204.0,236.0 L205.0,232.3 L206.0,228.6 L207.0,225.0 L208.0,221.4 L209.0,217.9 L210.0,214.5 L211.0,211.1 L212.0,207.8 L213.0,204.6 L214.0,201.5 L215.0,198.5 L216.0,195.6 L217.0,192.7 L218.0,190.0 L219.0,187.4 L220.0,184.8 L221.0,182.4 L222.0,180.1 L223.0,177.8 L224.0,175.7 L225.0,173.8 L226.0,171.9 L227.0,170.1 L228.0,168.5 L229.0,167.0 L230.0,165.6 L231.0,164.3 L232.0,163.2 L233.0,162.2 L234.0,161.3 L235.0,160.6 L236.0,160.0 L237.0,159.5 L238.0,159.1 L239.0,158.9 L240.0,158.8 L241.0,158.8 L242.0,159.0 L243.0,159.3 L244.0,159.8 L245.0,160.3 L246.0,161.0 L247.0,161.8 L248.0,162.8 L249.0,163.9 L250.0,165.1 L251.0,166.4 L252.0,167.9 L253.0,169.5 L254.0,171.2 L255.0,173.0 L256.0,174.9 L257.0,177.0 L258.0,179.2 L259.0,181.4 L260.0,183.8 L261.0,186.3 L262.0,188.9 L263.0,191.6 L264.0,194.4 L265.0,197.3 L266.0,200.3 L267.0,203.4 L268.0,206.5 L269.0,209.8 L270.0,213.1 L271.0,216.5 L272.0,220.0 L273.0,223.5 L274.0,227.1 L275.0,230.8 L276.0,234.5 L277.0,238.3 L278.0,242.1 L279.0,246.0 L280.0,249.9 L281.0,253.9 L282.0,257.9 L283.0,261.9 L284.0,266.0 L285.0,270.1 L286.0,274.1 L287.0,278.2 L288.0,282.4 L289.0,286.5 L290.0,290.6 L291.0,294.7 L292.0,298.8 L293.0,302.9 L294.0,307.0 L295.0,311.1 L296.0,315.1 L297.0,319.1 L298.0,323.1 L299.0,327.0 L300.0,330.9 L301.0,334.8 L302.0,338.6 L303.0,342.3 L304.0,346.0 L305.0,349.6 L306.0,353.2 L307.0,356.7 L308.0,360.1 L309.0,363.5 L310.0,366.8 L311.0,370.0 L312.0,373.1 L313.0,376.1 L314.0,379.0 L315.0,381.9 L316.0,384.6 L317.0,387.2 L318.0,389.8 L319.0,392.2 L320.0,394.5 L321.0,396.8 L322.0,398.9 L323.0,400.8 L324.0,402.7 L325.0,404.5 L326.0,406.1 L327.0,407.6 L328.0,409.0 L329.0,410.3 L330.0,411.4 L331.0,412.4 L332.0,413.3 L333.0,414.0 L334.0,414.6 L335.0,415.1 L336.0,415.5 L337.0,415.7 L338.0,415.8 L339.0,415.8 L340.0,415.6 L341.0,415.3 L342.0,414.8 L343.0,414.3 L344.0,413.6 L345.0,412.8 L346.0,411.8 L347.0,410.7 L348.0,409.5 L349.0,408.2 L350.0,406.7 L351.0,405.1 L352.0,403.4 L353.0,401.6 L354.0,399.7 L355.0,397.6 L356.0,395.4 L357.0,393.2 L358.0,390.8 L359.0,388.3 L360.0,385.7 L361.0,383.0 L362.0,380.2 L363.0,377.3 L364.0,374.3 L365.0,371.2 L366.0,368.1 L367.0,364.8 L368.0,361.5 L369.0,358.1 L370.0,354.6 L371.0,351.1 L372.0,347.5 L373.0,343.8 L374.0,340.1 L375.0,336.3 L376.0,332.5 L377.0,328.6 L378.0,324.7 L379.0,320.7 L380.0,316.7 L381.0,312.7 L382.0,308.6 L383.0,304.5 L384.0,300.5 L385.0,296.4 L386.0,292.2 L387.0,288.1 L388.0,284.0 L389.0,279.9 L390.0,275.8 L391.0,271.7 L392.0,267.6 L393.0,263.5 L394.0,259.5 L395.0,255.5 L396.0,251.5 L397.0,247.6 L398.0,243.7 L399.0,239.8 L400.0,236.0 L401.0,232.3 L402.0,228.6 L403.0,225.0 L404.0,221.4 L405.0,217.9 L406.0,214.5 L407.0,211.1 L408.0,207.8 L409.0,204.6 L410.0,201.5 L411.0,198.5 L412.0,195.6 L413.0,192.7 L414.0,190.0 L415.0,187.4 L416.0,184.8 L417.0,182.4 L418.0,180.1 L419.0,177.8 L420.0,175.7 L421.0,173.8 L422.0,171.9 L423.0,170.1 L424.0,168.5 L425.0,167.0 L426.0,165.6 L427.0,164.3 L428.0,163.2 L429.0,162.2 L430.0,161.3 L431.0,160.6 L432.0,160.0 L433.0,159.5 L434.0,159.1 L435.0,158.9 L436.0,158.8 L437.0,158.8 L438.0,159.0 L439.0,159.3 L440.0,159.8 L441.0,160.3 L442.0,161.0 L443.0,161.8 L444.0,162.8 L445.0,163.9 L446.0,165.1 L447.0,166.4 L448.0,167.9 L449.0,169.5 L450.0,171.2 L451.0,173.0 L452.0,174.9 L453.0,177.0 L454.0,179.2 L455.0,181.4 L456.0,183.8 L457.0,186.3 L458.0,188.9 L459.0,191.6 L460.0,194.4 L461.0,197.3 L462.0,200.3 L463.0,203.4 L464.0,206.5 L465.0,209.8 L466.0,213.1 L467.0,216.5 L468.0,220.0 L469.0,223.5 L470.0,227.1 L471.0,230.8 L472.0,234.5 L473.0,238.3 L474.0,242.1 L475.0,246.0 L476.0,249.9 L477.0,253.9 L478.0,257.9 L479.0,261.9 L480.0,266.0 L481.0,270.1 L482.0,274.1 L483.0,278.2 L484.0,282.4 L485.0,286.5 L486.0,290.6 L487.0,294.7 L488.0,298.8 L489.0,302.9 L490.0,307.0 L491.0,311.1 L492.0,315.1 L493.0,319.1 L494.0,323.1 L495.0,327.0 L496.0,330.9 L497.0,334.8 L498.0,338.6 L499.0,342.3 L500.0,346.0 L501.0,349.6 L502.0,353.2 L503.0,356.7 L504.0,360.1 L505.0,363.5 L506.0,366.8 L507.0,370.0 L508.0,373.1 L509.0,376.1 L510.0,379.0 L511.0,381.9 L512.0,384.6 L513.0,387.2 L514.0,389.8 L515.0,392.2 L516.0,394.5 L517.0,396.8 L518.0,398.9 L519.0,400.8 L520.0,402.7 L521.0,404.5 L522.0,406.1 L523.0,407.6 L524.0,409.0 L525.0,410.3 L526.0,411.4 L527.0,412.4 L528.0,413.3 L529.0,414.0 L530.0,414.6 L531.0,415.1 L532.0,415.5 L533.0,415.7 L534.0,415.8 L535.0,415.8 L536.0,415.6 L537.0,415.3 L538.0,414.8 L539.0,414.3 L540.0,413.6 L541.0,412.8 L542.0,411.8 L543.0,410.7 L544.0,409.5 L545.0,408.2 L546.0,406.7 L547.0,405.1 L548.0,403.4 L549.0,401.6 L550.0,399.7 L551.0,397.6 L552.0,395.4 L553.0,393.2 L554.0,390.8 L555.0,388.3 L556.0,385.7 L557.0,383.0 L558.0,380.2 L559.0,377.3 L560.0,374.3 L561.0,371.2 L562.0,368.1 L563.0,364.8 L564.0,361.5 L565.0,358.1 L566.0,354.6 L567.0,351.1 L568.0,347.5 L569.0,343.8 L570.0,340.1 L571.0,336.3 L572.0,332.5 L573.0,328.6 L574.0,324.7 L575.0,320.7 L576.0,316.7 L577.0,312.7 L578.0,308.6 L579.0,304.5 L580.0,300.5 L581.0,296.4 L582.0,292.2 L583.0,288.1 L584.0,284.0 L585.0,279.9 L586.0,275.8 L587.0,271.7 L588.0,267.6 L589.0,263.5 L590.0,259.5 L591.0,255.5 L592.0,251.5 L593.0,247.6 L594.0,243.7 L595.0,239.8 L596.0,236.0 L597.0,232.3 L598.0,228.6 L599.0,225.0 L600.0,221.4 L601.0,217.9 L602.0,214.5 L603.0,211.1 L604.0,207.8 L605.0,204.6 L606.0,201.5 L607.0,198.5 L608.0,195.6 L609.0,192.7 L610.0,190.0 L611.0,187.4 L612.0,184.8 L613.0,182.4 L614.0,180.1 L615.0,177.8 L616.0,175.7 L617.0,173.8 L618.0,171.9 L619.0,170.1 L620.0,168.5 L621.0,167.0 L622.0,165.6 L623.0,164.3 L624.0,163.2 L625.0,162.2 L626.0,161.3 L627.0,160.6 L628.0,160.0 L629.0,159.5 L630.0,159.1 L631.0,158.9 L632.0,158.8 L633.0,158.8 L634.0,159.0 L635.0,159.3 L636.0,159.8 L637.0,160.3 L638.0,161.0 L639.0,161.8 L640.0,162.8 L641.0,163.9 L642.0,165.1 L643.0,166.4 L644.0,167.9 L645.0,169.5 L646.0,171.2 L647.0,173.0 L648.0,174.9 L649.0,177.0 L650.0,179.2 L651.0,181.4 L652.0,183.8 L653.0,186.3 L654.0,188.9 L655.0,191.6 L656.0,194.4 L657.0,197.3 L658.0,200.3 L659.0,203.4 L660.0,206.5 L661.0,209.8 L662.0,213.1 L663.0,216.5 L664.0,220.0 L665.0,223.5 L666.0,227.1 L667.0,230.8 L668.0,234.5 L669.0,238.3 L670.0,242.1 L671.0,246.0 L672.0,249.9 L673.0,253.9 L674.0,257.9 L675.0,261.9 L676.0,266.0 L677.0,270.1 L678.0,274.1 L679.0,278.2 L680.0,282.4 L681.0,286.5 L682.0,290.6 L683.0,294.7 L684.0,298.8 L685.0,302.9 L686.0,307.0 L687.0,311.1 L688.0,315.1 L689.0,319.1 L690.0,323.1 L691.0,327.0 L692.0,330.9 L693.0,334.8 L694.0,338.6 L695.0,342.3 L696.0,346.0 L697.0,349.6 L698.0,353.2 L699.0,356.7 L700.0,360.1 L701.0,363.5 L702.0,366.8 L703.0,370.0 L704.0,373.1 L705.0,376.1 L706.0,379.0 L707.0,381.9 L708.0,384.6 L709.0,387.2 L710.0,389.8 L711.0,392.2 L712.0,394.5 L713.0,396.8 L714.0,398.9 L715.0,400.8 L716.0,402.7 L717.0,404.5 L718.0,406.1 L719.0,407.6 L720.0,409.0 L721.0,410.3 L722.0,411.4 L723.0,412.4 L724.0,413.3 L725.0,414.0 L726.0,414.6 L727.0,415.1 L728.0,415.5 L729.0,415.7 L730.0,415.8 L731.0,415.8 L732.0,415.6 L733.0,415.3 L734.0,414.8 L735.0,414.3 L736.0,413.6 L737.0,412.8 L738.0,411.8 L739.0,410.7 L740.0,409.5 L741.0,408.2 L742.0,406.7 L743.0,405.1 L744.0,403.4 L745.0,401.6 L746.0,399.7 L747.0,397.6 L748.0,395.4 L749.0,393.2 L750.0,390.8 L751.0,388.3 L752.0,385.7 L753.0,383.0 L754.0,380.2 L755.0,377.3 L756.0,374.3 L757.0,371.2 L758.0,368.1 L759.0,364.8 L760.0,361.5 L761.0,358.1 L762.0,354.6 L763.0,351.1 L764.0,347.5 L765.0,343.8 L766.0,340.1 L767.0,336.3 L768.0,332.5 L769.0,328.6 L770.0,324.7 L771.0,320.7 L772.0,316.7 L773.0,312.7 L774.0,308.6 L775.0,304.5 L776.0,300.5 L777.0,296.4 L778.0,292.2 L779.0,288.1 L780.0,284.0 L781.0,279.9 L782.0,275.8 L783.0,271.7 L784.0,267.6 L785.0,263.5 L786.0,259.5 L787.0,255.5 L788.0,251.5 L789.0,247.6 L790.0,243.7 L791.0,239.8 L792.0,236.0 L793.0,232.3 L794.0,228.6 L795.0,225.0 L796.0,221.4 L797.0,217.9 L798.0,214.5 L799.0,211.1 L800.0,207.8 L801.0,204.6 L802.0,201.5 L803.0,198.5 L804.0,195.6 L805.0,192.7 L806.0,190.0 L807.0,187.4 L808.0,184.8 L809.0,182.4 L810.0,180.1 L811.0,177.8 L812.0,175.7 L813.0,173.8 L814.0,171.9 L815.0,170.1 L816.0,168.5 L817.0,167.0 L818.0,165.6 L819.0,164.3 L820.0,163.2 L821.0,162.2 L822.0,161.3 L823.0,160.6 L824.0,160.0 L825.0,159.5 L826.0,159.1 L827.0,158.9 L828.0,158.8 L829.0,158.8 L830.0,159.0 L831.0,159.3 L832.0,159.8 L833.0,160.3 L834.0,161.0 L835.0,161.8 L836.0,162.8 L837.0,163.9 L838.0,165.1 L839.0,166.4 L840.0,167.9 L841.0,169.5 L842.0,171.2 L843.0,173.0 L844.0,174.9 L845.0,177.0 L846.0,179.2 L847.0,181.4 L848.0,183.8 L849.0,186.3 L850.0,188.9 L851.0,191.6 L852.0,194.4 L853.0,197.3 L854.0,200.3 L855.0,203.4 L856.0,206.5 L857.0,209.8 L858.0,213.1 L859.0,216.5 L860.0,220.0 L861.0,223.5 L862.0,227.1 L863.0,230.8 L864.0,234.5 L865.0,238.3 L866.0,242.1 L867.0,246.0 L868.0,249.9 L869.0,253.9 L870.0,257.9 L871.0,261.9 L872.0,266.0 L873.0,270.1 L874.0,274.1 L875.0,278.2 L876.0,282.4 L877.0,286.5 L878.0,290.6 L879.0,294.7 L880.0,298.8 L881.0,302.9 L882.0,307.0 L883.0,311.1 L884.0,315.1 L885.0,319.1 L886.0,323.1 L887.0,327.0 L888.0,330.9 L889.0,334.8 L890.0,338.6 L891.0,342.3 L892.0,346.0 L893.0,349.6 L894.0,353.2 L895.0,356.7 L896.0,360.1 L897.0,363.5 L898.0,366.8 L899.0,370.0 L900.0,373.1 L901.0,376.1 L902.0,379.0 L903.0,381.9 L904.0,384.6 L905.0,387.2 L906.0,389.8 L907.0,392.2 L908.0,394.5 L909.0,396.8 L910.0,398.9 L911.0,400.8 L912.0,402.7 L913.0,404.5 L914.0,406.1 L915.0,407.6 L916.0,409.0 L917.0,410.3 L918.0,411.4 L919.0,412.4 L920.0,413.3 L921.0,414.0 L922.0,414.6 L923.0,415.1 L924.0,415.5 L925.0,415.7 L926.0,415.8 L927.0,415.8 L928.0,415.6 L929.0,415.3 L930.0,414.8 L931.0,414.3 L932.0,413.6 L933.0,412.8 L934.0,411.8 L935.0,410.7 L936.0,409.5 L937.0,408.2 L938.0,406.7 L939.0,405.1 L940.0,403.4 L941.0,401.6 L942.0,399.7 L943.0,397.6 L944.0,395.4 L945.0,393.2 L946.0,390.8 L947.0,388.3 L948.0,385.7 L949.0,383.0 L950.0,380.2 L951.0,377.3 L952.0,374.3 L953.0,371.2 L954.0,368.1 L955.0,364.8 L956.0,361.5 L957.0,358.1 L958.0,354.6 L959.0,351.1 L960.0,347.5 L961.0,343.8 L962.0,340.1 L963.0,336.3 L964.0,332.5 L965.0,328.6 L966.0,324.7 L967.0,320.7 L968.0,316.7 L969.0,312.7 L970.0,308.6 L971.0,304.5 L972.0,300.5 L973.0,296.4 L974.0,292.2 L975.0,288.1 L976.0,284.0 L977.0,279.9 L978.0,275.8 L979.0,271.7 L980.0,267.6" stroke="url(#wg)" stroke-width="3.2" filter="url(#bl)"/>
</g>
<!-- T marker -->
<path d="M182 284L189.2 289.6L182 295.2z" fill="#ffff00"/>
<path d="M182 289.8H179.5V299.6" stroke="#b4b400" stroke-width=".9" fill="none"/><path d="M176.2 299.3H182.8L179.5 302.6z" fill="#b4b400"/>
<!-- red trigger pos -->
<path d="M577.6 497.4L582.6 490L587.6 497.4z" fill="#f01818"/>
</svg>
<div class="t" style="left:171.7px;top:283.3px;font-size:13.8px;font-weight:bold;color:#ffff00">T</div>
<div class="xl" style="left:190.5px">-1.00 us</div>
<div class="xl" style="left:268.9px">-800 ns</div>
<div class="xl" style="left:347.3px">-600 ns</div>
<div class="xl" style="left:425.7px">-400 ns</div>
<div class="xl" style="left:504.1px">-200 ns</div>
<div class="xl" style="left:582.5px">0 s</div>
<div class="xl" style="left:660.9px">200 ns</div>
<div class="xl" style="left:739.3px">400 ns</div>
<div class="xl" style="left:817.7px">600 ns</div>
<div class="xl" style="left:896.1px">800 ns</div>
<div class="xl" style="left:975.5px">1.00 us</div>

<div class="yl" style="top:80.9px">800 mV</div>
<div class="yl" style="top:133.1px">600 mV</div>
<div class="yl" style="top:185.3px">400 mV</div>
<div class="yl" style="top:237.5px">200 mV</div>
<div class="yl" style="top:289.7px">0 V</div>
<div class="yl" style="top:341.9px">-200 mV</div>
<div class="yl" style="top:394.1px">-400 mV</div>
<div class="yl" style="top:446.3px">-600 mV</div>
<div class="yl" style="top:498.5px">-800 mV</div>


<!-- dialog -->
<div class="abs" style="left:458px;top:106px;width:150px;height:115.6px;background:rgba(51,51,51,.93);border:1px solid #474747"></div>
<div class="abs" style="left:459px;top:107px;width:148px;height:27px;background:rgba(26,26,26,.93);border-bottom:1px solid #3c3c3c"></div>
<div class="t" style="left:462.8px;top:121.2px;transform:translateY(-50%);font-size:10.9px;font-weight:500;color:#f2f2f2">四维波形配置</div>
<div class="abs" style="left:546.4px;top:112.2px;width:1.1px;height:15.4px;background:#585858"></div>
<div class="abs" style="left:576.8px;top:112.2px;width:1.1px;height:15.4px;background:#585858"></div>
<div class="t" style="left:468px;top:153.8px;transform:translateY(-50%);font-size:8.2px;font-weight:500;color:#f0f0f0">通道-</div>
<div class="abs" style="left:492px;top:142.3px;width:106px;height:20.5px;background:rgba(76,76,76,.95)"></div>
<div class="abs" style="left:581.8px;top:146.6px;width:1px;height:12px;background:#2c2c2c"></div>
<div class="t" style="left:494px;top:152.8px;transform:translateY(-50%);font-size:8.4px;font-weight:500;color:#f4f4f4">通道1</div>
<div class="abs" style="left:468px;top:166.4px;width:130px;height:21px;background:rgba(74,74,74,.95);border-radius:2px"></div>
<div class="t c" style="left:533px;top:178.8px;font-size:9px;font-weight:500;color:#f4f4f4">打开显示</div>
<div class="abs" style="left:468.2px;top:193.8px;width:15.2px;height:15.2px;background:#ebebeb;border-radius:1.6px"></div>
<div class="t" style="left:487px;top:201.8px;transform:translateY(-50%);font-size:8.5px;font-weight:500;color:#f0f0f0">启动波形融合</div>

<svg width="1024" height="576" viewBox="0 0 1024 576" fill="none" stroke="#e4e4e4" stroke-width="1">
<path d="M564 116H558.6Q557 116 557 117.6V124Q557 125.8 558.6 125.8H566Q567.6 125.8 567.6 124V120.4" stroke="#c8c8c8"/>
<path d="M559.2 119.6H565.4M559.2 121.6H565.4M559.2 123.6H565.4" stroke="#c8c8c8" stroke-width=".9"/>
<path d="M565.2 115.8Q565.4 114.4 566.6 114.4T567.8 115.6Q567.8 116.6 566.6 116.8Q567.9 117 567.9 118T566.6 119.2Q565.3 119.2 565.1 118" stroke="#c8c8c8" stroke-width=".8"/>
<path d="M588.2 116.2L597.2 125.2M597.2 116.2L588.2 125.2" stroke-width="1.1"/>
<path d="M586.4 150.2L591 154.8L595.6 150.2" stroke-width="1.1"/>
</svg>

<!-- bottom toolbar -->
<div class="panel" style="left:163.4px;top:521.9px;width:858.8px;height:30.9px"></div>
<div class="btn" style="left:168.8px;top:528px;width:18.4px;height:18.8px"></div>
<div class="abs" style="left:195.6px;top:528.1px;width:18.8px;height:18.8px;border-radius:50%;background:#fff"></div>
<div class="t c" style="left:205px;top:537.8px;font-size:12.5px;font-weight:bold;color:#222">S</div>
<div class="btn bb" style="left:218.7px;width:63.8px">10 GSa/s</div>
<div class="btn bb" style="left:286.9px;width:64px">20 kpts</div>
<div class="abs" style="left:361.6px;top:527.9px;width:18.8px;height:18.8px;border-radius:50%;background:#fff"></div>
<div class="t c" style="left:371px;top:537.8px;font-size:12.5px;font-weight:bold;color:#222">H</div>
<div class="btn bb" style="left:384.6px;width:63.8px">200 ns/div</div>
<div class="btn bb" style="left:451px;width:19px"></div>
<div class="btn bb" style="left:472.8px;width:18.5px"></div>
<div class="btn bb" style="left:495.4px;width:64px">0 s</div>
<div class="btn bb" style="left:562.1px;width:18.8px"></div>
<div class="btn bb" style="left:583.4px;width:18.7px"></div>
<div class="btn bb" style="left:604.8px;width:18.6px"></div>
<div class="btn bb" style="left:999.6px;width:18.4px"></div>
<style>.bb{top:528px;height:18.5px;font-size:8.9px;font-weight:bold;color:#eee;padding-top:3.2px}</style>
<svg width="1024" height="576" viewBox="0 0 1024 576" fill="none" stroke="#eee" stroke-width="1.1">
<path d="M178 533L173.4 537.5L178 542M182.8 533L178.2 537.5L182.8 542"/>
<path d="M455 534.2L457.8 540.6L460.5 534.6Q461 533.8 461.5 534.8L462.7 540.2Q463.1 541 463.5 540.2L464.4 534.8Q464.8 533.8 465.2 534.8L466.3 540.6" stroke-width="1"/>
<path d="M476.2 534.2L478.2 539.4Q479.2 541.2 480.4 539.6L483.2 535.2Q484.4 533.6 485.4 535.2L487.6 540.6" stroke-width="1"/>
<path d="M574 533.4L569.4 537.4L574 541.6"/>
<ellipse cx="592.7" cy="537.5" rx="3.7" ry="4.1"/>
<path d="M611.6 533.4L616.2 537.4L611.6 541.6"/>
<path d="M1004.1 533L1008.8 537.8L1013.5 533M1004.1 537.4L1008.8 542.2L1013.5 537.4" stroke-width="1.2"/>
</svg>

<!-- taskbar -->
<div class="abs" style="left:0;top:554.8px;width:1024px;height:21.2px;background:#101010"></div>
<div class="abs" style="left:183.4px;top:554.8px;width:25.6px;height:21.2px;background:#333"></div>
<div class="abs" style="left:55.5px;top:574.8px;width:20.8px;height:1.2px;background:#76b9ed"></div>
<div class="abs" style="left:81.2px;top:574.8px;width:20.8px;height:1.2px;background:#76b9ed"></div>
<div class="abs" style="left:107px;top:574.8px;width:20.8px;height:1.2px;background:#76b9ed"></div>
<div class="abs" style="left:133px;top:574.8px;width:21.4px;height:1.2px;background:#76b9ed"></div>
<div class="abs" style="left:159px;top:574.8px;width:21.4px;height:1.2px;background:#76b9ed"></div>
<div class="abs" style="left:183.4px;top:574.8px;width:25.6px;height:1.2px;background:#76b9ed"></div>
<svg width="1024" height="576" viewBox="0 0 1024 576">
<path d="M8.2 562.2L12 561.7V565.2H8.2zM12.6 561.6L17 561V565.2H12.6zM8.2 565.8H12V569.3L8.2 568.8zM12.6 565.8H17V570L12.6 569.4z" fill="#fff"/>
<circle cx="39.8" cy="564.4" r="4.3" stroke="#fff" stroke-width="1.3" fill="none"/><path d="M36.8 567.6L33 571.4" stroke="#fff" stroke-width="1.4"/>
<circle cx="65.2" cy="565.2" r="3.1" stroke="#fff" stroke-width="1.8" fill="none"/>
<g stroke="#fff" stroke-width="1.6"><path d="M65.2 560.2V561.6M65.2 568.8V570.2M60.2 565.2H61.6M68.8 565.2H70.2M61.7 561.7L62.7 562.7M67.7 567.7L68.7 568.7M61.7 568.7L62.7 567.7M67.7 562.7L68.7 561.7"/></g>
<rect x="86.2" y="561" width="10.8" height="8.6" rx="1" fill="#22b14c"/>
<rect x="111.2" y="559" width="13" height="12.6" rx="2" fill="#1356a8"/>
<path d="M113.4 568L116 562.6M116.6 568L119.2 562.6M119.8 568L122.4 562.6" stroke="#fff" stroke-width="1.2"/>
<path d="M138.4 561H142.4L143.4 562.2H150V570H138.4z" fill="#f4c84a"/><rect x="138.4" y="563.4" width="11.6" height="6.6" fill="#fbd968"/><rect x="142" y="566.6" width="4.6" height="3.4" fill="#3c8fe0"/>
<defs><linearGradient id="eg" x1="0" y1="0" x2="1" y2="1"><stop offset="0" stop-color="#35b6e6"/><stop offset=".5" stop-color="#1b80d6"/><stop offset="1" stop-color="#1560b8"/></linearGradient><linearGradient id="eg2" x1="0" y1="1" x2="1" y2="0"><stop offset="0" stop-color="#2fb5a0"/><stop offset="1" stop-color="#74e05a"/></linearGradient></defs>
<circle cx="170.2" cy="565.3" r="6.5" fill="url(#eg)"/>
<path d="M169.6 559.2Q174.4 558.6 176.4 562.6Q177.4 566 175 567.8Q173 568.4 171.6 567.6Q173 566.2 172.4 564.6Q171.4 563 169.4 563.4Q170.6 561 169.6 559.2z" fill="url(#eg2)"/>
<path d="M168.6 566.4Q168.2 564.2 170.2 564Q171.8 564.2 171.6 566Q171.4 567.4 172.8 568Q175 568.8 176.8 567.4Q176 569.6 174 570.6Q170 569.6 168.6 566.4z" fill="#101010"/>
<circle cx="196.8" cy="563.7" r="4.3" stroke="#e8430f" stroke-width="1.7" fill="none"/>
<path d="M196.4 559.2V568.2" stroke="#e6e6e6" stroke-width="1.5"/><path d="M196.6 566L198.6 562.6" stroke="#d0d0d0" stroke-width="1"/>
<circle cx="193.1" cy="568.6" r="1.5" stroke="#1a8fe6" stroke-width="1" fill="none"/><circle cx="197.4" cy="570.2" r="1.5" stroke="#2aa4f0" stroke-width="1.1" fill="none"/>
<path d="M911.2 567.2L914.8 563.6L918.4 567.2" stroke="#eee" stroke-width="1" fill="none"/>
<rect x="928.2" y="561.4" width="12.2" height="7" rx=".8" stroke="#eee" stroke-width=".9" fill="none"/><path d="M930 563.4H938.6" stroke="#ccc" stroke-width=".7" stroke-dasharray="1 .8"/><path d="M930.4 566.4H938.2" stroke="#ccc" stroke-width=".7"/>
<path d="M1002.2 561.4H1011.2V567.6H1005L1002.2 570z" stroke="#fff" stroke-width="1" fill="#fff"/><path d="M1003.8 563.4H1009.8M1003.8 565.4H1009.8" stroke="#222" stroke-width=".7"/>
<circle cx="1010.6" cy="569" r="3.2" fill="#101010" stroke="#ddd" stroke-width=".8"/>
</svg>
<div class="t c" style="left:91.6px;top:565.7px;font-size:6.4px;font-weight:bold;color:#eafff0;letter-spacing:-.2px">QC</div>
<div class="t c" style="left:951px;top:565px;font-size:9.6px;color:#f2f2f2">英</div>
<div class="t c" style="left:976.6px;top:560.6px;font-size:6.8px;color:#eee">17:11</div>
<div class="t c" style="left:976.6px;top:570.4px;font-size:6.8px;color:#eee">2025/10/15</div>
<div class="t c" style="left:1010.6px;top:569.2px;font-size:4.8px;font-weight:bold;color:#fff">2</div>
</body></html>
